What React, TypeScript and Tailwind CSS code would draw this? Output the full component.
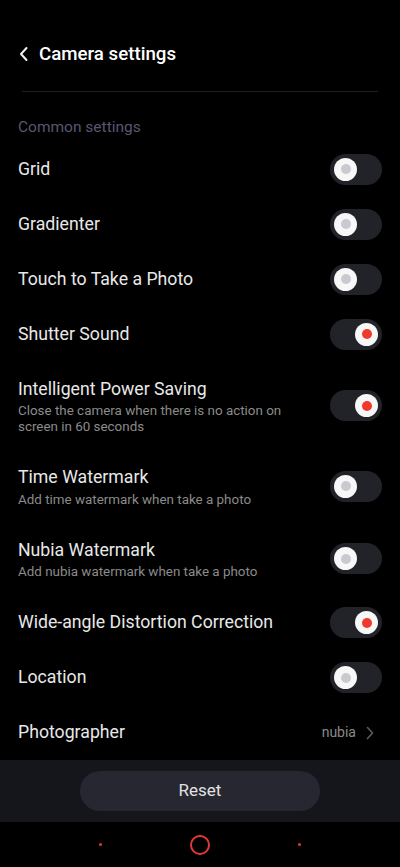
import React, { useState } from "react";

interface Setting {
    id: string;
    title: string;
    sub?: string;
    on: boolean;
}

const initial: Setting[] = [
    { id: "grid", title: "Grid", on: false },
    { id: "grad", title: "Gradienter", on: false },
    { id: "touch", title: "Touch to Take a Photo", on: false },
    { id: "shutter", title: "Shutter Sound", on: true },
    { id: "power", title: "Intelligent Power Saving", sub: "Close the camera when there is no action on screen in 60 seconds", on: true },
    { id: "time", title: "Time Watermark", sub: "Add time watermark when take a photo", on: false },
    { id: "nubia", title: "Nubia Watermark", sub: "Add nubia watermark when take a photo", on: false },
    { id: "wide", title: "Wide-angle Distortion Correction", on: true },
    { id: "loc", title: "Location", on: false },
];

function Toggle({ on, onClick }: { on: boolean; onClick: () => void }) {
    return (
        <button
            onClick={onClick}
            className={`flex h-[31px] w-[52px] shrink-0 items-center rounded-full bg-[#222329] px-[4px] ${on ? "justify-end" : "justify-start"}`}
        >
            <span className="flex h-[23px] w-[23px] items-center justify-center rounded-full bg-[#f7f7f7]">
                <span className={`h-[10px] w-[10px] rounded-full ${on ? "bg-[#f0382b]" : "bg-[#c9c9d1]"}`} />
            </span>
        </button>
    );
}

export default function App() {
    const [items, setItems] = useState<Setting[]>(initial);

    const flip = (id: string) =>
        setItems(items.map((s) => (s.id === id ? { ...s, on: !s.on } : s)));

    return (
        <div className="flex h-[867px] w-[400px] flex-col overflow-hidden bg-black font-['Roboto',sans-serif] text-[#e8e8e8]">
            <div className="min-h-0 flex-1">
                <div className="mt-[41px] flex h-[26px] items-center gap-[9px] pl-[18px]">
                    <svg width="12" height="16" viewBox="0 0 12 16" fill="none">
                        <path d="M8.5 2 L3 8 L8.5 14" stroke="#f2f2f2" strokeWidth="2" strokeLinecap="round" strokeLinejoin="round" />
                    </svg>
                    <h1 className="text-[18.7px] font-medium text-white">Camera settings</h1>
                </div>
                <div className="mx-[22px] mt-[24px] h-px bg-[#1f1f29]" />

                <p className="mt-[25px] pl-[18px] text-[15.5px] leading-[20px] text-[#59576f]">Common settings</p>

                <div className="mt-[4.5px]">
                    {items.map((s) =>
                        s.sub ? (
                            <div key={s.id} className="flex items-center justify-between py-[15px] pl-[18px] pr-[18px]">
                                <div className="pr-4">
                                    <div className="text-[17.7px] leading-[24px]">{s.title}</div>
                                    <div className="mt-[2.5px] w-[290px] text-[13.4px] leading-[16px] text-[#8b8b8b]">{s.sub}</div>
                                </div>
                                <Toggle on={s.on} onClick={() => flip(s.id)} />
                            </div>
                        ) : (
                            <div key={s.id} className="flex h-[55px] items-center justify-between pl-[18px] pr-[18px]">
                                <span className="text-[17.7px]">{s.title}</span>
                                <Toggle on={s.on} onClick={() => flip(s.id)} />
                            </div>
                        )
                    )}
                    <div className="flex h-[55px] items-center justify-between pl-[18px] pr-[26px]">
                        <span className="text-[17.7px]">Photographer</span>
                        <div className="flex items-center gap-[10px]">
                            <span className="text-[14px] text-[#8a8a8a]">nubia</span>
                            <svg width="8" height="14" viewBox="0 0 8 14" fill="none">
                                <path d="M1.5 1.5 L6.5 7 L1.5 12.5" stroke="#5c5c5c" strokeWidth="1.6" strokeLinecap="round" strokeLinejoin="round" />
                            </svg>
                        </div>
                    </div>
                </div>
            </div>

            <div className="flex h-[62px] shrink-0 items-center justify-center bg-[#15161c]">
                <button className="h-[40px] w-[240px] rounded-full bg-[#262731] text-[17px] text-[#e2e2e2]">Reset</button>
            </div>

            <div className="flex h-[45px] shrink-0 items-center justify-center gap-[88px]">
                <span className="h-[3px] w-[3px] rounded-full bg-[#e53935]" />
                <span className="h-[20px] w-[20px] rounded-full border-2 border-[#e53935]" />
                <span className="h-[3px] w-[3px] rounded-full bg-[#e53935]" />
            </div>
        </div>
    );
}
